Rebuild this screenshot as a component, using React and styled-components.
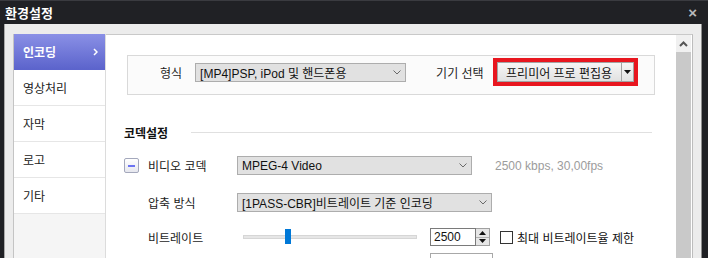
import React from "react";
import styled, { createGlobalStyle } from "styled-components";

const FONT = `"Liberation Sans", "Noto Sans CJK KR", sans-serif`;

const Global = createGlobalStyle`
  html, body { margin: 0; padding: 0; background: #1f2024; overflow: hidden; }
  #root { width: 708px; height: 258px; }
`;

const Window = styled.div`
  width: 708px;
  height: 258px;
  box-sizing: border-box;
  display: flex;
  flex-direction: column;
  background: #1f2024;
  padding: 0 6px 0 4px;
  font-family: ${FONT};
  overflow: hidden;
`;

const TitleBar = styled.div`
  height: 24px;
  flex: none;
  box-sizing: border-box;
  margin: 0 -6px 0 -4px;
  padding: 0 11px 0 5px;
  display: flex;
  align-items: center;
  justify-content: space-between;
  background: #202125;
  border-top: 1px solid #3a3b40;
  color: #fff;
  font-weight: bold;
  font-size: 13px;
`;

const CloseBtn = styled.span`
  color: #b9b9bb;
  font-size: 15px;
  font-weight: bold;
  line-height: 1;
`;

const Body = styled.div`
  flex: 1;
  min-height: 0;
  display: flex;
  background: #ececec;
  border-left: 1px solid #a9a9a9;
  border-right: 1px solid #8d8d8d;
  padding: 10px 8px 0 8px;
`;

const Sidebar = styled.div`
  width: 93px;
  flex: none;
  box-sizing: border-box;
  background: #f5f5f5;
  border-left: 1px solid #c4c4c4;
  border-right: 1px solid #dcdcdc;
  display: flex;
  flex-direction: column;
`;

const NavItem = styled.div`
  height: 36px;
  box-sizing: border-box;
  display: flex;
  align-items: center;
  justify-content: space-between;
  padding: 0 7px 0 9px;
  font-size: 12px;
  color: ${(p) => (p.$active ? "#fff" : "#222")};
  font-weight: ${(p) => (p.$active ? "bold" : "normal")};
  background: ${(p) =>
    p.$active ? "linear-gradient(#8a90e6, #5c64cc)" : "#fff"};
  border-bottom: 1px solid ${(p) => (p.$active ? "#5c64cc" : "#e6e6e6")};
`;

const Panel = styled.div`
  flex: 1;
  display: flex;
  background: #fff;
  border-top: 1px solid #c9c9c9;
  border-right: 1px solid #bdbdbd;
  min-width: 0;
`;

const Content = styled.div`
  flex: 1;
  padding: 20px 21px 0 18px;
  display: flex;
  flex-direction: column;
`;

const ScrollBar = styled.div`
  width: 15px;
  flex: none;
  margin-right: 1px;
  display: flex;
  flex-direction: column;
`;

const ScrollArrow = styled.div`
  height: 17px;
  display: flex;
  align-items: center;
  justify-content: center;
  background: #f0f0f0;
`;

const ScrollThumb = styled.div`
  flex: 1;
  background: #c9c9c9;
`;

const GroupBox = styled.div`
  margin-left: 3px;
  height: 40px;
  box-sizing: border-box;
  border: 1px solid #d9d9d9;
  background: #fbfbfb;
  display: flex;
  align-items: center;
  padding: 2px 0 8px 32px;
`;

const Label = styled.span`
  font-size: 12px;
  color: #1c1c1c;
  white-space: nowrap;
  margin-left: ${(p) => p.$ml || 0}px;
  margin-right: ${(p) => p.$mr || 0}px;
`;

const Select = styled.div`
  width: ${(p) => p.$w}px;
  height: 19px;
  box-sizing: border-box;
  flex: none;
  border: 1px solid #adadad;
  background: #e1e1e1;
  display: flex;
  align-items: center;
  justify-content: space-between;
  padding: 0 4px 0 4px;
  font-size: 12px;
  color: #111;
  white-space: nowrap;
`;

const Chevron = () => (
  <svg width="8" height="5" viewBox="0 0 8 5">
    <path d="M0.5 0.5 L4 4 L7.5 0.5" fill="none" stroke="#6a6a6a" strokeWidth="1" />
  </svg>
);

const RedFrame = styled.div`
  width: 145px;
  height: 28px;
  box-sizing: border-box;
  border: 4px solid #e8161f;
  display: flex;
`;

const DropButton = styled.div`
  flex: 1;
  display: flex;
  border: 1px solid #a3a3a3;
  background: linear-gradient(#f6f6f6, #e1e1e1);
`;

const DropLabel = styled.div`
  flex: 1;
  display: flex;
  align-items: center;
  justify-content: center;
  font-size: 12px;
  color: #111;
  white-space: nowrap;
`;

const DropArrow = styled.div`
  width: 11px;
  border-left: 1px solid #a3a3a3;
  display: flex;
  align-items: center;
  justify-content: center;
`;

const SectionHead = styled.div`
  margin-top: 29px;
  height: 16px;
  display: flex;
  align-items: center;
`;

const SectionTitle = styled.span`
  font-size: 12px;
  font-weight: bold;
  color: #111;
`;

const SectionLine = styled.div`
  flex: 1;
  height: 1px;
  background: #e0e0e0;
  margin: 0 3px 0 23px;
`;

const Row = styled.div`
  display: flex;
  align-items: center;
  height: 20px;
  margin-top: ${(p) => p.$mt}px;
`;

const ToggleCell = styled.div`
  width: 24px;
  flex: none;
  display: flex;
  align-items: center;
`;

const LabelCell = styled.div`
  width: 89px;
  flex: none;
  font-size: 12px;
  color: #1c1c1c;
  white-space: nowrap;
`;

const Toggle = styled.div`
  width: 15px;
  height: 15px;
  box-sizing: border-box;
  border: 1px solid #a4a8bc;
  border-radius: 2px;
  background: linear-gradient(#ffffff, #e6e7ee);
  display: flex;
  align-items: center;
  justify-content: center;
  &::after {
    content: "";
    width: 7px;
    height: 2px;
    background: #6c74f2;
  }
`;

const Info = styled.span`
  margin-left: 23px;
  font-size: 12px;
  color: #9c9c9c;
  white-space: nowrap;
`;

const SliderTrack = styled.div`
  position: relative;
  margin-left: 6px;
  width: 174px;
  height: 4px;
  box-sizing: border-box;
  background: #e6e6e6;
  border: 1px solid #d6d6d6;
`;

const SliderThumb = styled.div`
  position: absolute;
  top: -7px;
  width: 6px;
  height: 15px;
  background: #0078d7;
`;

const Spin = styled.div`
  margin-left: 13px;
  height: 18px;
  display: flex;
`;

const SpinInput = styled.div`
  width: 46px;
  box-sizing: border-box;
  border: 1px solid #7a7a7a;
  background: #fff;
  font-size: 12px;
  color: #111;
  display: flex;
  align-items: center;
  padding-left: 3px;
`;

const SpinButtons = styled.div`
  width: 14px;
  box-sizing: border-box;
  border: 1px solid #a0a0a0;
  border-left: none;
  background: #e6e6e6;
  display: flex;
  flex-direction: column;
`;

const SpinHalf = styled.div`
  flex: 1;
  display: flex;
  align-items: center;
  justify-content: center;
  border-top: ${(p) => (p.$bottom ? "1px solid #b0b0b0" : "none")};
`;

const Check = styled.div`
  margin-left: 10px;
  width: 13px;
  height: 13px;
  box-sizing: border-box;
  border: 1px solid #333;
  background: #fff;
`;

const CheckLabel = styled.span`
  margin-left: 4px;
  font-size: 12px;
  color: #111;
  white-space: nowrap;
`;

const PartialInput = styled.div`
  margin-left: 306px;
  width: 63px;
  height: 18px;
  box-sizing: border-box;
  border: 1px solid #a8a8a8;
  background: #fff;
`;

const Tri = ({ up }) => (
  <svg width="7" height="4" viewBox="0 0 7 4">
    <path d={up ? "M0 4 L3.5 0 L7 4 Z" : "M0 0 L3.5 4 L7 0 Z"} fill="#111" />
  </svg>
);

const navItems = ["인코딩", "영상처리", "자막", "로고", "기타"];

export default function App() {
  return (
    <>
      <Global />
      <Window>
        <TitleBar>
          <span>환경설정</span>
          <CloseBtn>×</CloseBtn>
        </TitleBar>
        <Body>
          <Sidebar>
            {navItems.map((n, i) => (
              <NavItem key={n} $active={i === 0}>
                <span>{n}</span>
                {i === 0 && (
                  <svg width="5" height="8" viewBox="0 0 5 8">
                    <path d="M1 1 L4 4 L1 7" fill="none" stroke="#fff" strokeWidth="1.5" />
                  </svg>
                )}
              </NavItem>
            ))}
          </Sidebar>
          <Panel>
            <Content>
              <GroupBox>
                <Label $mr={13}>형식</Label>
                <Select $w={211}>
                  <span>[MP4]PSP, iPod 및 핸드폰용</span>
                  <Chevron />
                </Select>
                <Label $ml={30} $mr={9}>
                  기기 선택
                </Label>
                <RedFrame>
                  <DropButton>
                    <DropLabel>프리미어 프로 편집용</DropLabel>
                    <DropArrow>
                      <Tri />
                    </DropArrow>
                  </DropButton>
                </RedFrame>
              </GroupBox>

              <SectionHead>
                <SectionTitle>코덱설정</SectionTitle>
                <SectionLine />
              </SectionHead>

              <Row $mt={16}>
                <ToggleCell>
                  <Toggle />
                </ToggleCell>
                <LabelCell>비디오 코덱</LabelCell>
                <Select $w={235}>
                  <span>MPEG-4 Video</span>
                  <Chevron />
                </Select>
                <Info>2500 kbps, 30,00fps</Info>
              </Row>

              <Row $mt={18}>
                <ToggleCell />
                <LabelCell>압축 방식</LabelCell>
                <Select $w={255}>
                  <span>[1PASS-CBR]비트레이트 기준 인코딩</span>
                  <Chevron />
                </Select>
              </Row>

              <Row $mt={16}>
                <ToggleCell />
                <LabelCell>비트레이트</LabelCell>
                <SliderTrack>
                  <SliderThumb style={{ left: `${(2500 / 10500) * 174}px` }} />
                </SliderTrack>
                <Spin>
                  <SpinInput>2500</SpinInput>
                  <SpinButtons>
                    <SpinHalf>
                      <Tri up />
                    </SpinHalf>
                    <SpinHalf $bottom>
                      <Tri />
                    </SpinHalf>
                  </SpinButtons>
                </Spin>
                <Check />
                <CheckLabel>최대 비트레이트율 제한</CheckLabel>
              </Row>

              <Row $mt={7}>
                <PartialInput />
              </Row>
            </Content>
            <ScrollBar>
              <ScrollArrow>
                <svg width="9" height="6" viewBox="0 0 9 6">
                  <path d="M1 5 L4.5 1.5 L8 5" fill="none" stroke="#555" strokeWidth="2" />
                </svg>
              </ScrollArrow>
              <ScrollThumb />
            </ScrollBar>
          </Panel>
        </Body>
      </Window>
    </>
  );
}
